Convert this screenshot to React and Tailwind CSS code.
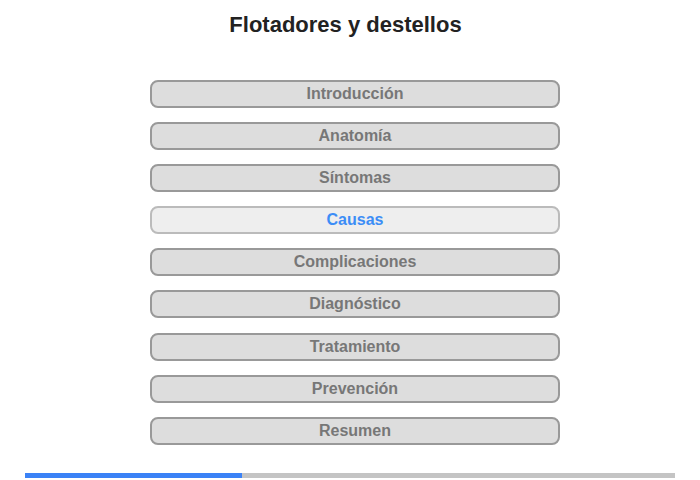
import React, { useState } from 'react';

const sections = [
  'Introducción',
  'Anatomía',
  'Síntomas',
  'Causas',
  'Complicaciones',
  'Diagnóstico',
  'Tratamiento',
  'Prevención',
  'Resumen',
];

const App = () => {
  const [active, setActive] = useState(3);

  return (
    <div
      className="w-[700px] h-[480px] bg-white flex flex-col items-center"
      style={{ fontFamily: '"Liberation Sans", Arial, sans-serif' }}
    >
      <h1 className="mt-[11px] mr-[9px] text-[22px] leading-[28px] font-bold text-[#222222]">
        Flotadores y destellos
      </h1>

      <div className="mt-[41px] ml-[10px] flex flex-col gap-[14.1px]">
        {sections.map((name, i) => (
          <button
            key={name}
            onClick={() => setActive(i)}
            className={
              i === active
                ? 'w-[410px] h-[28px] rounded-[8px] border-2 border-[#bbbbbb] bg-[#eeeeee] text-[#3c8df6] text-[16px] font-bold cursor-pointer'
                : 'w-[410px] h-[28px] rounded-[8px] border-2 border-[#999999] bg-[#dddddd] text-[#777777] text-[16px] font-bold cursor-pointer'
            }
          >
            {name}
          </button>
        ))}
      </div>

      <div className="mt-[28px] w-[650px] h-[5px] bg-[#c4c4c4] flex">
        <div className="w-1/3 h-full bg-[#3b82f6]"></div>
      </div>
    </div>
  );
};

export default App;
